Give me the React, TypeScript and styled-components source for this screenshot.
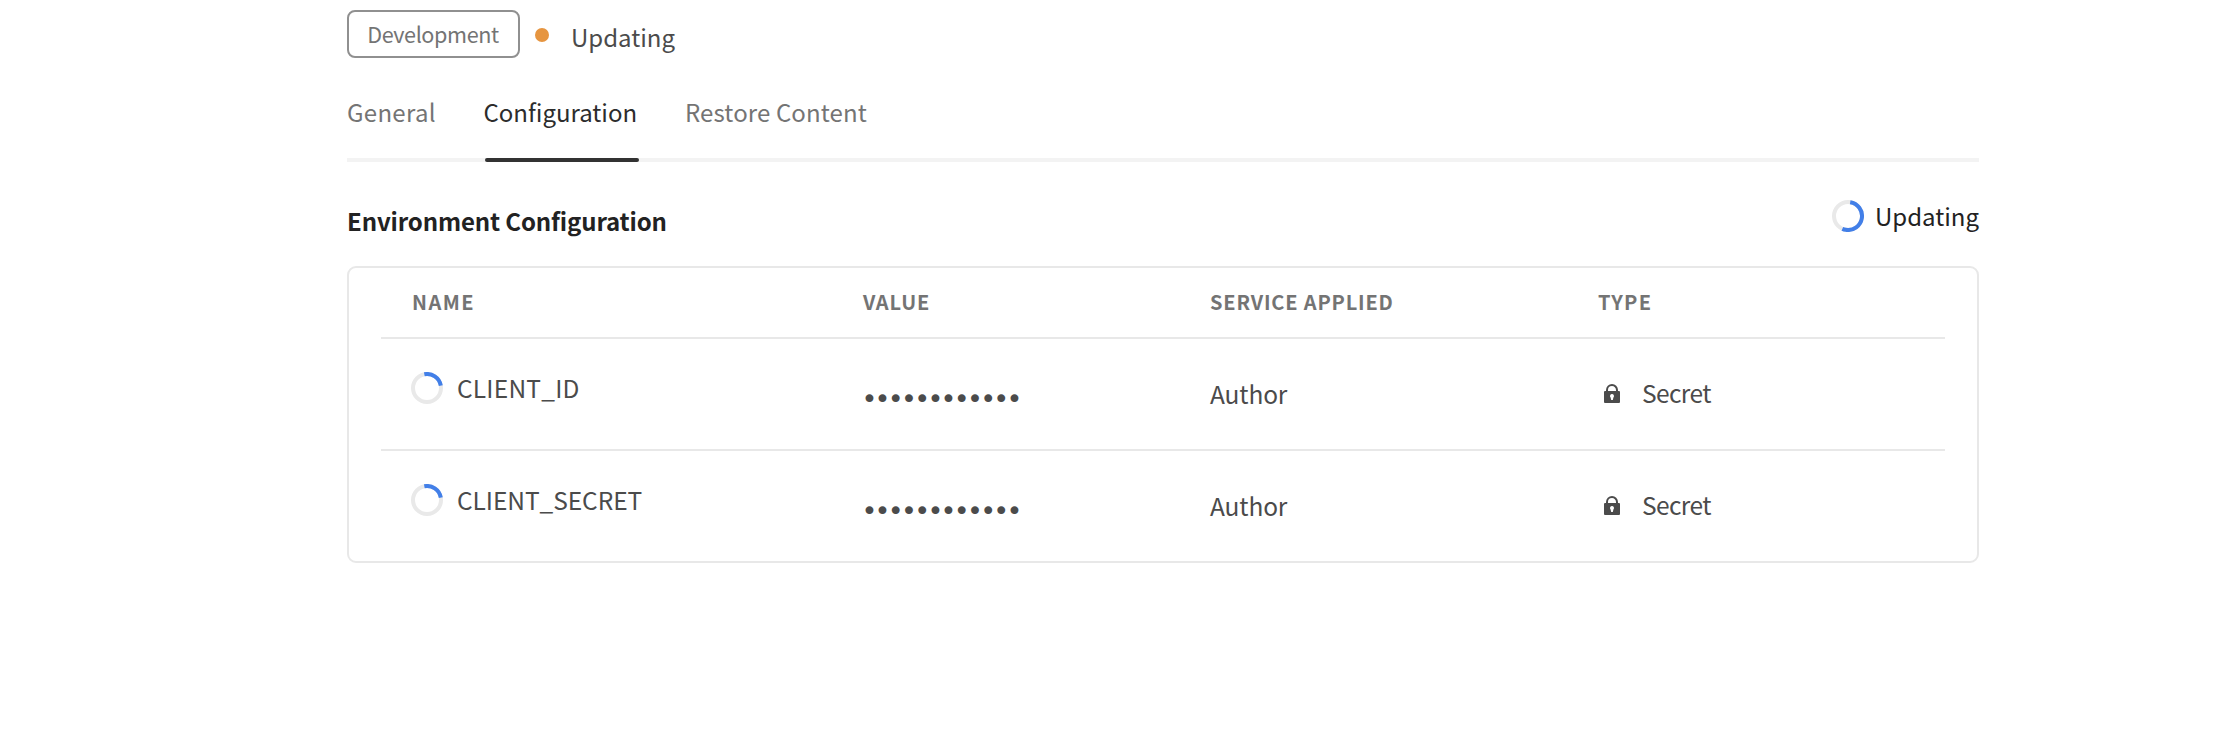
import React from "react";
import styled, { createGlobalStyle } from "styled-components";

const GlobalStyle = createGlobalStyle`
  *, *::before, *::after { box-sizing: border-box; }
  body {
    margin: 0;
    background: #fff;
    font-family: "Noto Sans CJK SC", "Noto Sans", sans-serif;
    color: #4b4b4b;
  }
`;

const Page = styled.main`
  min-height: 746px;
  padding: 10px 251px 0 347px;
`;

const StatusRow = styled.header`
  display: flex;
  align-items: center;
  height: 48px;
`;

const Tag = styled.span`
  width: 173px;
  height: 48px;
  padding-left: 18.2px;
  border: 2px solid #909090;
  border-radius: 8px;
  color: #747474;
  font-size: 21.6px;
  line-height: 43px;
  letter-spacing: -0.4px;
  white-space: nowrap;
`;

const StatusDot = styled.span`
  width: 14px;
  height: 14px;
  margin: 2px 22px 0 15px;
  border-radius: 50%;
  background: #e69540;
`;

const StatusText = styled.span`
  padding-top: 5px;
  font-size: 24px;
  line-height: 32px;
`;

const Tabs = styled.nav`
  display: grid;
  grid-template-columns: 136.5px 201.5px 1fr;
  height: 80px;
  margin-top: 24px;
  box-shadow: inset 0 -4px #f3f3f3;
`;

const Tab = styled.a<{ $active?: boolean; $spacing?: number }>`
  display: flex;
  flex-direction: column;
  justify-content: space-between;
  color: ${(p) => (p.$active ? "#2c2c2c" : "#747474")};
  font-size: 24px;
  line-height: 59px;
  letter-spacing: ${(p) => p.$spacing ?? 0}px;
  white-space: nowrap;
`;

const ActiveBar = styled.span`
  width: 154px;
  height: 4px;
  margin-left: 1.5px;
  border-radius: 2px;
  background: #323232;
`;

const SectionHeader = styled.div`
  display: flex;
  justify-content: space-between;
  height: 104px;
`;

const SectionTitle = styled.h2`
  margin: 42px 0 0;
  color: #222;
  font-size: 24px;
  font-weight: 700;
  line-height: 33px;
  letter-spacing: -0.13px;
`;

const Progress = styled.div`
  display: flex;
  align-items: center;
  gap: 11px;
  height: 32px;
  margin-top: 38px;
  color: #222;
  font-size: 24px;
  line-height: 30px;
`;

const ProgressLabel = styled.span`
  margin-top: -1px;
`;

const Card = styled.section`
  height: 297px;
  padding: 0 32px;
  border: 2px solid #e8e8e8;
  border-radius: 9px;
`;

const Row = styled.div`
  display: grid;
  grid-template-columns: 482px 347px 388px 1fr;
  height: 112px;
  border-bottom: 2px solid #e8e8e8;
  &:last-child { border-bottom: 0; }
`;

const HeaderRow = styled(Row)`
  height: 71px;
`;

const HeaderCell = styled.div<{ $spacing: number; $inset?: number }>`
  padding-left: ${(p) => p.$inset ?? 0}px;
  color: #747474;
  font-size: 20px;
  font-weight: 700;
  line-height: 67px;
  letter-spacing: ${(p) => p.$spacing}px;
`;

const Cell = styled.div<{ $spacing?: number }>`
  display: flex;
  align-items: center;
  height: 109px;
  font-size: 24.5px;
  line-height: 32px;
  letter-spacing: ${(p) => p.$spacing ?? 0}px;
`;

const NameCell = styled(Cell)`
  height: 98px;
  gap: 14px;
  padding-left: 30px;
`;

const SecretValue = styled(Cell)`
  height: 119px;
  margin-left: -1.6px;
  font-family: "DejaVu Sans", sans-serif;
  font-size: 27px;
`;

const TypeCell = styled(Cell)`
  height: 107px;
  gap: 22px;
  padding-left: 6px;
`;

const Glyph = styled.svg<{ $drop?: number }>`
  display: block;
  flex: none;
  margin-top: ${(p) => p.$drop ?? 0}px;
`;

function Spinner({ start, sweep }: { start: number; sweep: number }) {
  return (
    <Glyph width="32" height="32" viewBox="0 0 32 32" fill="none" strokeWidth="4">
      <circle cx="16" cy="16" r="14" stroke="#e9e9e9" />
      <circle
        cx="16"
        cy="16"
        r="14"
        stroke="#427fe8"
        pathLength="360"
        strokeDasharray={`${sweep} ${360 - sweep}`}
        transform={`rotate(${start - 90} 16 16)`}
      />
    </Glyph>
  );
}

function LockIcon() {
  return (
    <Glyph $drop={2} width="16" height="19" viewBox="0 0 16 19">
      <path d="M3 8V5.9a5 4.9 0 0 1 10 0V8" fill="none" stroke="#4b4b4b" strokeWidth="2" />
      <path
        fill="#4b4b4b"
        fillRule="evenodd"
        d="M1 7h14a1 1 0 0 1 1 1v10a1 1 0 0 1-1 1H1a1 1 0 0 1-1-1V8a1 1 0 0 1 1-1Zm7 3a2 2 0 0 0-1.4 3.4L7.2 16h1.6l.6-2.6A2 2 0 0 0 8 10Z"
      />
    </Glyph>
  );
}

const variables = [
  { name: "CLIENT_ID", spacing: 0.22 },
  { name: "CLIENT_SECRET", spacing: -0.06 },
];

export default function App() {
  return (
    <>
      <GlobalStyle />
      <Page>
        <StatusRow>
          <Tag>Development</Tag>
          <StatusDot />
          <StatusText>Updating</StatusText>
        </StatusRow>
        <Tabs>
          <Tab $spacing={0.3}>General</Tab>
          <Tab $active>
            Configuration
            <ActiveBar />
          </Tab>
          <Tab $spacing={0.12}>Restore Content</Tab>
        </Tabs>
        <SectionHeader>
          <SectionTitle>Environment Configuration</SectionTitle>
          <Progress>
            <Spinner start={9} sweep={195} />
            <ProgressLabel>Updating</ProgressLabel>
          </Progress>
        </SectionHeader>
        <Card>
          <HeaderRow>
            <HeaderCell $spacing={1.5} $inset={31}>NAME</HeaderCell>
            <HeaderCell $spacing={0.85}>VALUE</HeaderCell>
            <HeaderCell $spacing={0.82}>SERVICE APPLIED</HeaderCell>
            <HeaderCell $spacing={1.2}>TYPE</HeaderCell>
          </HeaderRow>
          {variables.map((v) => (
            <Row key={v.name}>
              <NameCell $spacing={v.spacing}>
                <Spinner start={-11} sweep={91} />
                {v.name}
              </NameCell>
              <SecretValue $spacing={-2.73}>••••••••••••</SecretValue>
              <Cell $spacing={-0.14}>Author</Cell>
              <TypeCell $spacing={-0.6}>
                <LockIcon />
                Secret
              </TypeCell>
            </Row>
          ))}
        </Card>
      </Page>
    </>
  );
}
